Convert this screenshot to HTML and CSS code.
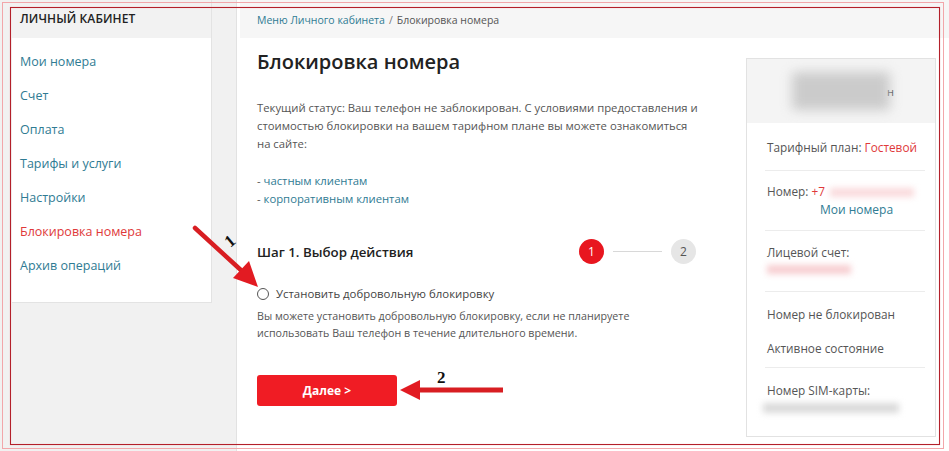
FILE: index.html
```html
<!DOCTYPE html>
<html lang="ru">
<head>
<meta charset="utf-8">
<title>Блокировка номера</title>
<link rel="stylesheet" href="styles.css">
</head>
<body>
<div class="page">
  <aside class="sidebar">
    <div class="sidebar-title">ЛИЧНЫЙ КАБИНЕТ</div>
    <nav class="menu">
      <a class="menu-item" href="#">Мои номера</a>
      <a class="menu-item" href="#">Счет</a>
      <a class="menu-item" href="#">Оплата</a>
      <a class="menu-item" href="#">Тарифы и услуги</a>
      <a class="menu-item" href="#">Настройки</a>
      <a class="menu-item active" href="#">Блокировка номера</a>
      <a class="menu-item" href="#">Архив операций</a>
    </nav>
  </aside>

  <main class="main">
    <div class="crumbs"><a href="#">Меню Личного кабинета</a><span class="sep">/</span><span>Блокировка номера</span></div>
    <div class="content">
      <section class="body">
        <h1 class="title">Блокировка номера</h1>
        <p class="status">Текущий статус: Ваш телефон не заблокирован. С условиями предоставления и<br>стоимостью блокировки на вашем тарифном плане вы можете ознакомиться<br>на сайте:</p>
        <div class="links">
          <div>- <a href="#">частным клиентам</a></div>
          <div>- <a href="#">корпоративным клиентам</a></div>
        </div>

        <div class="step-row">
          <h2 class="step-title">Шаг 1. Выбор действия</h2>
          <div class="stepper">
            <span class="dot current">1</span>
            <span class="dash"></span>
            <span class="dot">2</span>
          </div>
        </div>

        <label class="radio-row"><span class="radio"></span>Установить добровольную блокировку</label>
        <p class="hint">Вы можете установить добровольную блокировку, если не планируете<br>использовать Ваш телефон в течение длительного времени.</p>

        <button class="next" type="button">Далее &gt;</button>
      </section>

      <aside class="info">
        <div class="info-head"><span class="blur-name"></span><span class="name-end">н</span></div>
        <div class="info-row">
          <div>Тарифный план: <span class="red">Гостевой</span></div>
        </div>
        <div class="info-row">
          <div>Номер: <span class="num">+7</span><span class="blur-pink short"></span></div>
          <a class="my-numbers" href="#">Мои номера</a>
        </div>
        <div class="info-row">
          <div>Лицевой счет:</div>
          <span class="blur-pink"></span>
        </div>
        <div class="info-row tall">
          <div>Номер не блокирован</div>
          <div class="state">Активное состояние</div>
        </div>
        <div class="info-row last">
          <div>Номер SIM-карты:</div>
          <span class="blur-gray"></span>
        </div>
      </aside>
    </div>
  </main>
</div>

<div class="frame frame-outer"></div>
<div class="frame frame-inner"></div>

<svg class="annot" width="949" height="451" viewBox="0 0 949 451">
  <line x1="195" y1="228" x2="243" y2="272" stroke="#d81e22" stroke-width="4.5" stroke-linecap="round"/>
  <polygon points="258,287 233,278 249,261" fill="#e21b22"/>
  <text x="226" y="248" transform="rotate(-40 228 242)" class="annot-num">1</text>
  <line x1="416" y1="390" x2="503" y2="390" stroke="#d81e22" stroke-width="5"/>
  <polygon points="400,390 420,380 420,400" fill="#e21b22"/>
  <text x="437" y="383" class="annot-num">2</text>
</svg>
</body>
</html>
```
FILE: styles.css
```css
* { box-sizing: border-box; }

html, body {
  margin: 0;
  padding: 0;
}

body {
  width: 949px;
  height: 451px;
  overflow: hidden;
  background: #f1f1f1;
  font-family: "Open Sans", "Noto Sans", Arial, sans-serif;
  color: #444;
  position: relative;
}

a { text-decoration: none; color: #2f7b93; }

.page {
  display: flex;
  align-items: flex-start;
  padding-left: 12px;
  height: 451px;
}

/* Sidebar */
.sidebar {
  width: 200px;
  background: #fff;
  border-right: 1px solid #e3e3e3;
  border-bottom: 1px solid #e3e3e3;
  padding-bottom: 19px;
}

.sidebar-title {
  height: 38px;
  line-height: 38px;
  padding-left: 8px;
  background: #f2f2f2;
  font-size: 12px;
  font-weight: 600;
  color: #222;
  letter-spacing: 0.1px;
}

.menu {
  display: flex;
  flex-direction: column;
  padding: 7px 8px 0;
}

.menu-item {
  line-height: 34px;
  font-size: 12.5px;
  color: #2f7b93;
}

.menu-item.active { color: #e0393a; }

/* Main */
.main {
  margin-left: 24px;
  flex: 1;
  align-self: stretch;
  background: #fff;
  border-left: 1px solid #e2e2e2;
}

.crumbs {
  height: 38px;
  background: #f6f6f6;
  padding: 13px 0 0 17px;
  margin-left: 3px;
  font-size: 10.5px;
  color: #555;
}

.crumbs a { color: #2f7b93; }
.crumbs .sep { margin: 0 4px; color: #777; }

.content {
  display: flex;
  padding: 0 13px 0 20px;
}

.body {
  width: 470px;
  padding-top: 10px;
}

.title {
  margin: 0;
  font-size: 20px;
  line-height: 28px;
  font-weight: 600;
  color: #222;
}

.status {
  margin: 23px 0 0;
  font-size: 11.3px;
  line-height: 18px;
  color: #555;
  white-space: nowrap;
}

.links {
  margin-top: 19px;
  font-size: 11.3px;
  line-height: 18px;
  color: #555;
}

.links a { color: #2f7b93; }

.step-row {
  display: flex;
  align-items: center;
  justify-content: space-between;
  width: 439px;
  margin-top: 31px;
}

.step-title {
  margin: 0;
  font-size: 13.3px;
  font-weight: 600;
  color: #222;
  line-height: 20px;
}

.stepper {
  display: flex;
  align-items: center;
}

.dot {
  width: 25px;
  height: 25px;
  border-radius: 50%;
  background: #e6e6e6;
  color: #555;
  font-size: 12px;
  display: flex;
  align-items: center;
  justify-content: center;
}

.dot.current { background: #e8161f; color: #fff; }

.dash {
  width: 49px;
  height: 1px;
  margin: 0 9px;
  background: #d8d8d8;
}

.radio-row {
  display: flex;
  align-items: center;
  margin-top: 21px;
  font-size: 11.4px;
  line-height: 18px;
  color: #444;
}

.radio {
  width: 12px;
  height: 12px;
  border: 1px solid #555;
  border-radius: 50%;
  margin-right: 7px;
  flex: none;
}

.hint {
  margin: 5px 0 0;
  font-size: 10.7px;
  line-height: 17px;
  color: #555;
}

.next {
  margin-top: 33px;
  width: 140px;
  height: 31px;
  border: 0;
  border-radius: 3px;
  background: #f01c24;
  color: #fff;
  font-family: inherit;
  font-size: 12px;
  font-weight: 700;
}

/* Info panel */
.info {
  margin-left: auto;
  margin-top: 20px;
  width: 190px;
  height: 379px;
  border: 1px solid #e2e2e2;
  background: #fff;
  font-size: 11.8px;
  color: #555;
}

.info-head {
  height: 64px;
  background: #f4f4f4;
  display: flex;
  align-items: center;
  justify-content: center;
  padding-left: 4px;
}

.blur-name {
  width: 98px;
  height: 38px;
  background: #c4c4c4;
  filter: blur(6px);
  opacity: 0.85;
}

.name-end {
  font-size: 11px;
  color: #444;
  margin-left: -3px;
}

.info-row {
  margin: 0 10px 0 18px;
  padding: 16px 0 0 2px;
  border-bottom: 1px solid #ececec;
  line-height: 18px;
}

.info-row:nth-child(2) { height: 48px; padding-top: 15px; }
.info-row:nth-child(3) { height: 60px; padding-top: 11px; }
.info-row:nth-child(4) { height: 61px; padding-top: 12px; }
.info-row.tall { height: 76px; padding-top: 13px; }
.info-row.last { border-bottom: 0; padding-top: 13px; }

.red { color: #e0393a; }
.num { color: #e0393a; }

.blur-pink {
  display: block;
  width: 84px;
  height: 9px;
  margin-top: 4px;
  background: #f7cdd0;
  filter: blur(3px);
}

.blur-pink.short {
  display: inline-block;
  width: 84px;
  margin: 0 0 0 5px;
  vertical-align: middle;
  background: #fadadc;
}

.blur-gray {
  display: block;
  width: 136px;
  height: 10px;
  margin: 4px 0 0 -4px;
  background: #dadada;
  filter: blur(3px);
}

.my-numbers {
  display: block;
  padding-left: 53px;
  color: #2f7b93;
  font-size: 12px;
  margin-top: 1px;
}

.state { margin-top: 16px; }

/* Screenshot frame & annotations overlay */
.frame {
  position: absolute;
  pointer-events: none;
}

.frame-outer {
  left: 2px;
  top: 2px;
  width: 942px;
  height: 447px;
  border: 1px solid #f2a6aa;
}

.frame-inner {
  left: 10px;
  top: 7px;
  width: 930px;
  height: 438px;
  border: 1.5px solid #b3202a;
  box-shadow: 0 0 1px #f2a6aa, inset 0 0 1px #f2a6aa;
}

.annot {
  position: absolute;
  left: 0;
  top: 0;
  pointer-events: none;
}

.annot-num {
  font-family: "Liberation Serif", "Times New Roman", serif;
  font-weight: 700;
  font-size: 17px;
  fill: #111;
}
```
